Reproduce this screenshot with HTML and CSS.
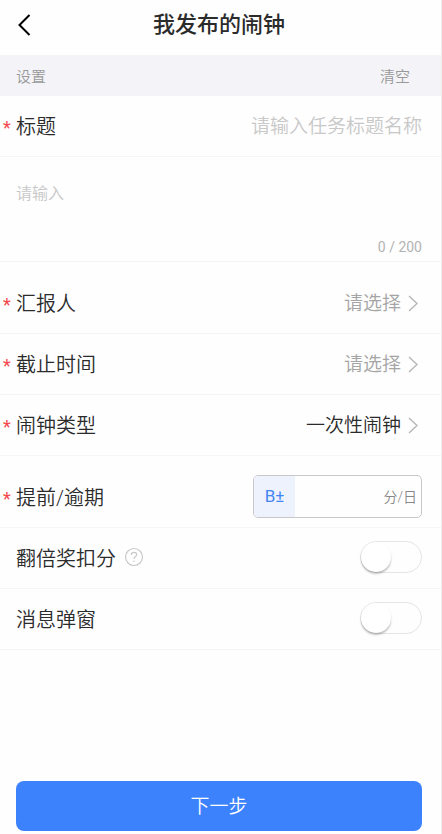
FILE: index.html
```html
<!DOCTYPE html>
<html lang="zh-CN">
<head>
    <meta charset="UTF-8">
    <meta name="viewport" content="width=device-width, initial-scale=1.0">
    <title>我发布的闹钟</title>
    <link rel="stylesheet" href="styles.css">
</head>
<body>
    <form class="page">
        <header class="header">
            <button type="button" class="back" aria-label="返回">
                <svg width="14" height="24" viewBox="0 0 14 24"><path d="M12.500 2 2.500 12l10 10" fill="none" stroke="#000" stroke-width="2"/></svg>
            </button>
            <h1 class="header-title">我发布的闹钟</h1>
        </header>

        <div class="bar">
            <span>设置</span>
            <button type="button" class="clear">清空</button>
        </div>

        <div class="row required">
            <label class="label" for="title">标题</label>
            <input class="value title-input" id="title" type="text" placeholder="请输入任务标题名称">
        </div>

        <div class="content">
            <textarea class="textarea" id="content" aria-label="请输入" placeholder="请输入" maxlength="200"></textarea>
            <div class="counter">0 / 200</div>
        </div>

        <div class="group">
            <div class="row required">
                <label class="label" for="reporter">汇报人</label>
                <select class="value select empty" id="reporter">
                    <option value="">请选择</option>
                </select>
                <svg class="arrow" width="21" height="20" viewBox="0 0 21 20"><path d="M8 4l8 7.500-8 7.500" fill="none" stroke="#b4b4b4" stroke-width="1.300"/></svg>
            </div>
            <div class="row required">
                <label class="label" for="deadline">截止时间</label>
                <select class="value select empty" id="deadline">
                    <option value="">请选择</option>
                </select>
                <svg class="arrow" width="21" height="20" viewBox="0 0 21 20"><path d="M8 4l8 7.500-8 7.500" fill="none" stroke="#b4b4b4" stroke-width="1.300"/></svg>
            </div>
            <div class="row required">
                <label class="label" for="type">闹钟类型</label>
                <select class="value select" id="type">
                    <option>一次性闹钟</option>
                </select>
                <svg class="arrow" width="21" height="20" viewBox="0 0 21 20"><path d="M8 4l8 7.500-8 7.500" fill="none" stroke="#b4b4b4" stroke-width="1.300"/></svg>
            </div>
        </div>

        <div class="group">
            <div class="row required">
                <label class="label" for="score">提前/逾期</label>
                <div class="score">
                    <span class="score-type">B±</span>
                    <input class="score-input" id="score" type="text" inputmode="numeric">
                    <span class="score-unit">分/日</span>
                </div>
            </div>
            <div class="row">
                <label class="label" for="double">翻倍奖扣分</label>
                <button type="button" class="help" aria-label="说明">
                    <svg width="20" height="20" viewBox="0 0 20 20" fill="none" stroke="#c8c8c8"><circle cx="10" cy="10" r="8.500" stroke-width="1.200"/><path d="M7.300 8c0-1.700 1.200-2.700 2.700-2.700s2.700 1 2.700 2.400c0 1.800-2.700 2-2.700 4.300" stroke-width="1.200"/><circle cx="10" cy="14.300" r=".8" fill="#c8c8c8" stroke="none"/></svg>
                </button>
                <input class="switch" id="double" type="checkbox" role="switch">
            </div>
            <div class="row">
                <label class="label" for="popup">消息弹窗</label>
                <input class="switch" id="popup" type="checkbox" role="switch">
            </div>
        </div>

        <footer class="footer">
            <button type="submit" class="next">下一步</button>
        </footer>
    </form>
</body>
</html>
```

FILE: styles.css
```css
* {
    box-sizing: border-box;
}

body {
    margin: 0;
    background: #fefefe;
    color: #2b2b2b;
    font-family: Roboto, "Noto Sans CJK SC", sans-serif;
    font-weight: 350;
}

button, input, select, textarea {
    margin: 0;
    padding: 0;
    border: none;
    outline: none;
    background: none;
    color: inherit;
    font-family: inherit;
    font-weight: inherit;
}

svg {
    display: block;
}

.page {
    display: flex;
    flex-direction: column;
    min-height: 100vh;
    border-right: 1px solid #eeeeee;
}

.header {
    display: grid;
    grid-template-columns: 48px 1fr 48px;
    align-items: center;
    height: 55px;
    padding: 0 3px 5px 0;
}

.back {
    justify-self: center;
    cursor: pointer;
}

.header-title {
    margin: 0;
    font-size: 22px;
    font-weight: 500;
    line-height: 30px;
    text-align: center;
}

.bar {
    display: flex;
    justify-content: space-between;
    align-items: center;
    height: 41px;
    padding: 0 31px 1px 16px;
    background: #f3f3f8;
    color: #999999;
    font-size: 15px;
}

.clear {
    font-size: 15px;
    cursor: pointer;
}

.row {
    display: flex;
    align-items: center;
    height: 61px;
    padding: 0 19px 2px 16px;
    border-bottom: 1px solid #f4f5f6;
}

.required {
    padding-left: 3px;
}

.required::before {
    content: "*";
    width: 13px;
    padding-top: 4px;
    color: #f5484d;
    font-size: 18px;
    font-weight: 400;
}

.label {
    font-size: 20px;
}

.value {
    margin-left: auto;
    padding-top: 3px;
    font-size: 19px;
    line-height: 28px;
    text-align: right;
}

.title-input {
    flex: 1;
    min-width: 0;
}

::placeholder {
    color: #c8c8c8;
    opacity: 1;
}

.content {
    height: 105px;
    padding: 25px 19px 4px 16px;
    border-bottom: 1px solid #f4f5f6;
}

.textarea {
    display: block;
    width: 100%;
    height: 55px;
    font-size: 16px;
    line-height: 24px;
    resize: none;
}

.counter {
    color: #b3b3b3;
    font-size: 14px;
    font-weight: 400;
    line-height: 20px;
    text-align: right;
}

.group {
    padding-top: 11px;
}

.select {
    appearance: none;
}

.empty {
    color: #a5a5a5;
}

.score {
    display: flex;
    width: 169px;
    height: 43px;
    margin-left: auto;
    overflow: hidden;
    border: 1px solid #c8c8c8;
    border-radius: 5px;
}

.score-type {
    display: flex;
    align-items: center;
    justify-content: center;
    width: 41px;
    background: #edf2fc;
    color: #4285f4;
    font-size: 17px;
    font-weight: 400;
}

.score-input {
    flex: 1;
    min-width: 0;
    font-size: 17px;
    text-align: right;
}

.score-unit {
    align-self: center;
    padding: 0 4px;
    color: #888888;
    font-size: 14px;
}

.help {
    margin-left: 8px;
    cursor: pointer;
}

.switch {
    appearance: none;
    width: 62px;
    height: 32px;
    margin-left: auto;
    border: 1px solid #e5e5e5;
    border-radius: 16px;
    cursor: pointer;
}

.switch::before {
    content: "";
    display: block;
    width: 30px;
    height: 30px;
    border-radius: 50%;
    background: #ffffff;
    box-shadow: 0 2px 2px rgba(0, 0, 0, 0.25);
}

.switch:checked {
    background: #3d82fd;
}

.switch:checked::before {
    margin-left: auto;
}

.footer {
    margin-top: auto;
    padding: 16px 19px 3px 16px;
}

.next {
    display: block;
    width: 100%;
    height: 50px;
    padding-bottom: 4px;
    border-radius: 8px;
    background: #3d82fd;
    color: #ffffff;
    font-size: 19px;
    cursor: pointer;
}
```
